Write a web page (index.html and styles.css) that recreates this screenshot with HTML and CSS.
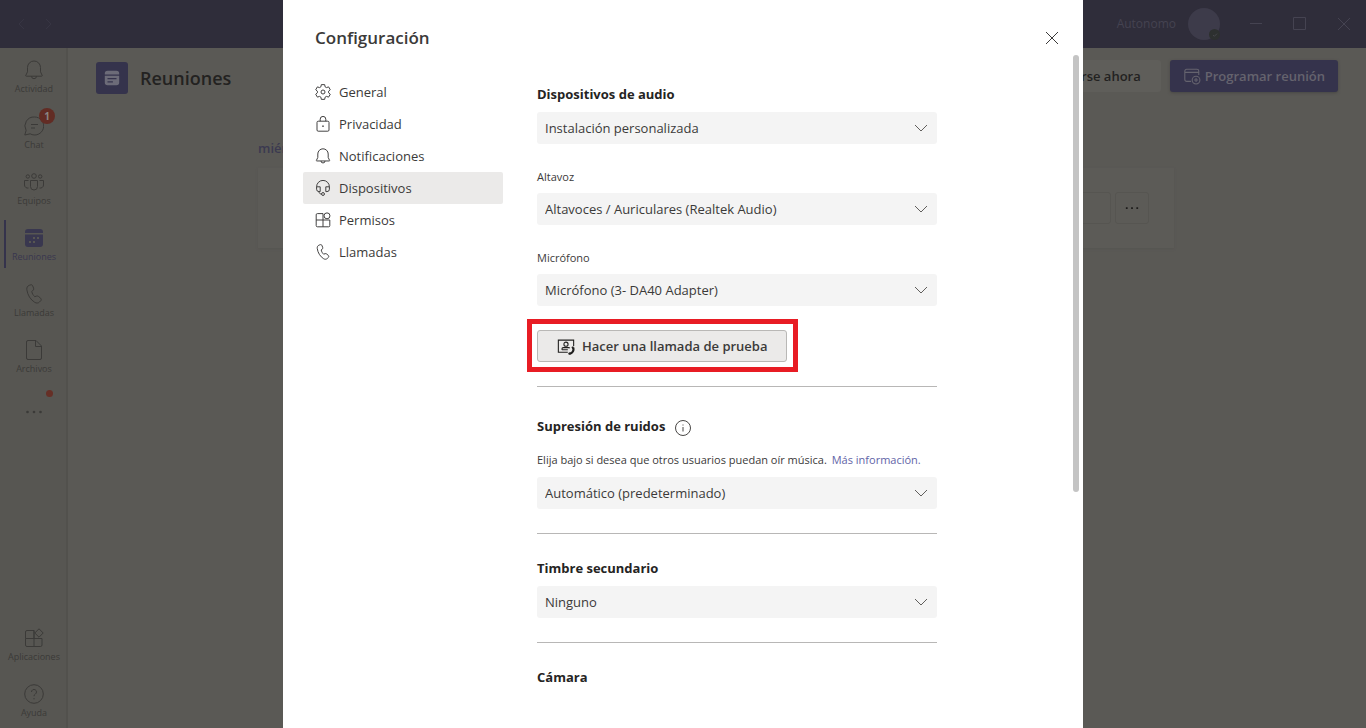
FILE: index.html
```html
<!DOCTYPE html>
<html lang="es">
<head>
<meta charset="utf-8">
<meta name="viewport" content="width=device-width, initial-scale=1">
<title>Configuración</title>
<link rel="stylesheet" href="styles.css">
</head>
<body>
<svg class="defs" aria-hidden="true">
  <symbol id="bell" viewBox="0 0 20 20"><path d="M10 1a6.500 6.500 0 0 0-6.500 6.500v4.300L1.800 15.400a.5.5 0 0 0 .5.8h15.400a.5.5 0 0 0 .5-.8L16.500 11.800V7.500A6.500 6.500 0 0 0 10 1zM7.500 16.200a2.500 2.500 0 0 0 5 0"/></symbol>
  <symbol id="phone" viewBox="0 0 20 20"><path d="M6.800.8 5.300 1.300C3.500 1.900 2.600 3.500 2.800 5.500c.7 5.500 3.700 10.200 8 12.900 1.600 1 3.500.8 4.700-.4l1.200-1.200c.7-.7.700-1.800 0-2.500l-2.100-1.800c-.6-.5-1.300-.6-2-.4l-1.800.6c-1.700-1.400-2.600-3.100-3-5.200l1.400-1.400c.5-.5.7-1.200.4-1.900L8.700 1.900C8.400 1 7.600.5 6.800.8z"/></symbol>
  <symbol id="apps" viewBox="0 0 20 20"><path d="M1.500 10.500V4A1.500 1.500 0 0 1 3 2.500h7v16H3A1.500 1.500 0 0 1 1.500 17v-6.500h16.500V17a1.500 1.500 0 0 1-1.500 1.500H10M10 10.500v-8M15 .8 19.200 5 15 9.200 10.800 5z"/></symbol>
  <symbol id="widgets" viewBox="0 0 20 20"><path d="M10 10V2H3a1.500 1.500 0 0 0-1.500 1.500V17A1.500 1.500 0 0 0 3 18.500h14a1.500 1.500 0 0 0 1.500-1.500v-7h-17M10 10v8.500"/><circle cx="15" cy="4.800" r="3.700"/></symbol>
  <symbol id="chevron" viewBox="0 0 16 16"><path d="m2 5 6 6 6-6"/></symbol>
  <symbol id="cross" viewBox="0 0 16 16"><path d="m2 2 12 12M14 2 2 14"/></symbol>
</svg>

<div class="app">
  <header class="topbar">
    <div class="history">
      <button class="plain" aria-label="Atrás"><svg class="icon small" viewBox="0 0 16 16"><path d="m10 3-5 5 5 5"/></svg></button>
      <button class="plain" aria-label="Adelante"><svg class="icon small" viewBox="0 0 16 16"><path d="m6 3 5 5-5 5"/></svg></button>
    </div>
    <div class="account">
      <span>Autonomo</span>
      <span class="avatar"><i class="presence"><svg class="icon" viewBox="0 0 12 12"><path d="m3 6 2 2 4-4"/></svg></i></span>
    </div>
    <div class="window-buttons">
      <button class="plain" aria-label="Minimizar"><svg class="icon small" viewBox="0 0 16 16"><path d="M2 7.500h12"/></svg></button>
      <button class="plain" aria-label="Maximizar"><svg class="icon small" viewBox="0 0 16 16"><path d="M1.500 1.500h12v12h-12z"/></svg></button>
      <button class="plain" aria-label="Cerrar ventana"><svg class="icon small"><use href="#cross"/></svg></button>
    </div>
  </header>

  <div class="workspace">
    <nav class="rail" aria-label="Aplicaciones">
      <a class="rail-item" href="#"><svg class="icon large"><use href="#bell"/></svg>Actividad</a>
      <a class="rail-item" href="#"><svg class="icon large" viewBox="0 0 20 20"><path d="M10.500 1a9 9 0 1 1-4.300 16.800L.8 19l1.300-4.600A9 9 0 0 1 10.500 1zM7 8.500h7M7 12h4"/></svg>Chat<b class="badge">1</b></a>
      <a class="rail-item" href="#"><svg class="icon large" viewBox="0 0 20 20"><circle cx="10" cy="4" r="2.300"/><circle cx="3.800" cy="4.500" r="1.700"/><circle cx="16.200" cy="4.500" r="1.700"/><path d="M6.500 8.500h7v6a3.500 3.500 0 0 1-7 0zM4.500 8.500h-4v4.500a3.200 3.200 0 0 0 4 3M15.500 8.500h4v4.500a3.200 3.200 0 0 1-4 3"/></svg>Equipos</a>
      <a class="rail-item active" href="#"><svg class="large" viewBox="0 0 20 20"><path fill="currentColor" fill-rule="evenodd" d="M4 1h12a3 3 0 0 1 3 3v1H1V4a3 3 0 0 1 3-3zM1 6.500h18V16a3 3 0 0 1-3 3H4a3 3 0 0 1-3-3zM9 9v2h2V9zm4 0v2h2V9zm-8 4v2h2v-2zm4 0v2h2v-2z"/></svg>Reuniones</a>
      <a class="rail-item" href="#"><svg class="icon large"><use href="#phone"/></svg>Llamadas</a>
      <a class="rail-item" href="#"><svg class="icon large" viewBox="0 0 20 20"><path d="M4 .5h8L17.500 6v12a1.500 1.500 0 0 1-1.500 1.500H4A1.500 1.500 0 0 1 2.500 18V2A1.500 1.500 0 0 1 4 .5zM11.500.5V6.500h6"/></svg>Archivos</a>
      <button class="rail-item more" aria-label="Más aplicaciones"><svg class="large" viewBox="0 0 20 20"><g fill="currentColor"><circle cx="3.500" cy="10" r="1.300"/><circle cx="10" cy="10" r="1.300"/><circle cx="16.500" cy="10" r="1.300"/></g></svg><i class="alert"></i></button>
      <a class="rail-item push" href="#"><svg class="icon large"><use href="#apps"/></svg>Aplicaciones</a>
      <a class="rail-item" href="#"><svg class="icon large" viewBox="0 0 20 20"><circle cx="10" cy="10" r="9.300"/><path d="M7.500 8a2.500 2.500 0 1 1 3.800 2.100c-.9.600-1.300 1-1.300 2.100M10 14v1.300"/></svg>Ayuda</a>
    </nav>

    <main class="main">
      <div class="page-head">
        <span class="page-icon"><svg viewBox="0 0 20 20"><path fill="currentColor" fill-rule="evenodd" d="M5 2h10a3 3 0 0 1 3 3v1H2V5a3 3 0 0 1 3-3zM2 7.500h16V15a3 3 0 0 1-3 3H5a3 3 0 0 1-3-3zM5 10v1.500h10V10zm0 3.500V15h6v-1.500z"/></svg></span>
        <h1 class="page-title">Reuniones</h1>
        <button class="button light">Reunirse ahora</button>
        <button class="button accent"><svg class="icon" viewBox="0 0 20 20"><path d="M9 16H4a2 2 0 0 1-2-2V4.500a2 2 0 0 1 2-2h11.500a2 2 0 0 1 2 2V9M2 6h15.500"/><circle cx="14.500" cy="14.500" r="4.300"/><path d="M14.500 12.300v4.400M12.300 14.500h4.400"/></svg>Programar reunión</button>
      </div>
      <section class="agenda">
        <h2 class="day">miércoles</h2>
        <div class="meeting">
          <button class="button chat" aria-label="Chatear"></button>
          <button class="button dots" aria-label="Más opciones"><svg viewBox="0 0 16 16"><path fill="currentColor" d="M1 7h2v2H1zM7 7h2v2H7zM13 7h2v2h-2z"/></svg></button>
        </div>
      </section>
    </main>
  </div>
</div>

<div class="backdrop">
  <section class="dialog" role="dialog" aria-modal="true" aria-labelledby="dialog-title">
    <header class="dialog-head">
      <h2 class="dialog-title" id="dialog-title">Configuración</h2>
      <button class="plain" aria-label="Cerrar"><svg class="icon small"><use href="#cross"/></svg></button>
    </header>
    <div class="dialog-body">
      <nav class="menu" aria-label="Configuración">
        <a class="menu-item" href="#"><svg class="icon" viewBox="0 0 20 20"><path d="M7.900.8h4.200l.5 2.700 1.700 1 2.700-.9 2.100 3.600-2.100 1.800v2l2.100 1.800-2.100 3.600-2.700-.9-1.700 1-.5 2.700H7.900l-.5-2.700-1.700-1-2.700.9-2.100-3.600L3 11V9L.9 7.200 3 3.600l2.700.9 1.700-1z"/><circle cx="10" cy="10" r="2.500"/></svg>General</a>
        <a class="menu-item" href="#"><svg class="icon" viewBox="0 0 20 20"><path d="M4 6.500h12A1.500 1.500 0 0 1 17.500 8v9.500A1.500 1.500 0 0 1 16 19H4a1.500 1.500 0 0 1-1.500-1.500V8A1.500 1.500 0 0 1 4 6.500zM6.500 6.500V4a3.500 3.500 0 0 1 7 0v2.500"/><circle cx="10" cy="12.700" r=".6"/></svg>Privacidad</a>
        <a class="menu-item" href="#"><svg class="icon"><use href="#bell"/></svg>Notificaciones</a>
        <a class="menu-item current" href="#" aria-current="page"><svg class="icon" viewBox="0 0 20 20"><path d="M2 8.500a8 8 0 0 1 16 0v3a3 3 0 0 1-3 3h-1.500V8.500H18M2 8.500h4.500v6H5a3 3 0 0 1-3-3v-3M5 14.500c0 2 1.200 3 3.200 3"/><circle cx="10" cy="17.500" r="1.800"/></svg>Dispositivos</a>
        <a class="menu-item" href="#"><svg class="icon"><use href="#widgets"/></svg>Permisos</a>
        <a class="menu-item" href="#"><svg class="icon"><use href="#phone"/></svg>Llamadas</a>
      </nav>

      <div class="settings">
        <section class="group">
          <h3 class="heading"><label for="audio">Dispositivos de audio</label></h3>
          <div class="picker"><select id="audio"><option>Instalación personalizada</option></select><svg class="icon small"><use href="#chevron"/></svg></div>
          <label class="label" for="speaker">Altavoz</label>
          <div class="picker"><select id="speaker"><option>Altavoces / Auriculares (Realtek Audio)</option></select><svg class="icon small"><use href="#chevron"/></svg></div>
          <label class="label" for="mic">Micrófono</label>
          <div class="picker"><select id="mic"><option>Micrófono (3- DA40 Adapter)</option></select><svg class="icon small"><use href="#chevron"/></svg></div>
          <div class="highlight">
            <button class="test-call"><svg class="icon" viewBox="0 0 20 20"><path d="M12 17H1.500V3.500h17V10"/><circle cx="10" cy="8" r="2.300"/><path d="M5.500 14.200v-.9A1.500 1.500 0 0 1 7 11.800h6a1.500 1.500 0 0 1 1.200.6M5.500 14.200H12"/><path stroke-width="2.400" d="M18 11.800c1 3-.6 6-4 7M16.500 12.300l2-.8M13.500 17.300l.7 2"/></svg>Hacer una llamada de prueba</button>
          </div>
        </section>
        <section class="group noise">
          <h3 class="heading"><label for="noise">Supresión de ruidos</label><svg class="icon" viewBox="0 0 16 16"><circle cx="8" cy="8" r="7.500"/><path d="M8 7v4.500M8 4.500v1"/></svg></h3>
          <p class="hint">Elija bajo si desea que otros usuarios puedan oír música. <a href="#">Más información.</a></p>
          <div class="picker"><select id="noise"><option>Automático (predeterminado)</option></select><svg class="icon small"><use href="#chevron"/></svg></div>
        </section>
        <section class="group">
          <h3 class="heading"><label for="ringer">Timbre secundario</label></h3>
          <div class="picker"><select id="ringer"><option>Ninguno</option></select><svg class="icon small"><use href="#chevron"/></svg></div>
        </section>
        <section class="group">
          <h3 class="heading">Cámara</h3>
        </section>
      </div>
    </div>
    <div class="scroll-thumb"></div>
  </section>
</div>
</body>
</html>
```

FILE: styles.css
```css
* { box-sizing: border-box; }

body {
  margin: 0;
  height: 100vh;
  overflow: hidden;
  font-family: "Open Sans", "Noto Sans", sans-serif;
  font-size: 13px;
  line-height: 20px;
  color: #3b3a39;
}

h1, h2, h3, p { margin: 0; }
a { color: inherit; text-decoration: none; }
button, select { font: inherit; color: inherit; }

.defs { position: absolute; width: 0; height: 0; }

.icon { fill: none; stroke: currentColor; width: 16px; height: 16px; stroke-width: 1.2; flex: none; }
.small { width: 16px; height: 16px; stroke-width: 1; }
.large { width: 20px; height: 20px; stroke-width: 1; flex: none; }

.plain { display: grid; place-items: center; padding: 0; border: 0; background: none; }

/* Application behind the dialog */
.app { display: flex; flex-direction: column; height: 100%; background: #5a5955; color: #353432; }

.topbar {
  display: flex;
  align-items: center;
  gap: 28px;
  height: 48px;
  padding: 0 14px;
  background: #2f2d3a;
  color: #454351;
  font-size: 12px;
}
.history { display: flex; gap: 10px; color: #373543; }
.account { display: flex; align-items: center; gap: 12px; margin-left: auto; }
.avatar { position: relative; width: 32px; height: 32px; border-radius: 50%; background: #3d3b4a; }
.presence { position: absolute; right: 0; bottom: 0; width: 11px; height: 11px; border-radius: 50%; background: #2d302f; display: grid; place-items: center; color: #4a4a50; }
.presence .icon { width: 8px; height: 8px; }
.window-buttons { display: flex; gap: 28px; }

.workspace { display: flex; flex: 1; min-height: 0; }

.rail { display: flex; flex-direction: column; width: 68px; background: #575652; border-right: 2px solid #52514d; }
.rail-item {
  position: relative;
  display: flex;
  flex-direction: column;
  align-items: center;
  gap: 2px;
  height: 56px;
  padding: 12px 0 0 2px;
  border: 0;
  background: none;
  font-size: 9px;
  line-height: 14px;
  color: #3b3a38;
}
.rail-item.active { color: #39374f; }
.rail-item.active::before { content: ""; position: absolute; left: 4px; top: 4px; bottom: 4px; width: 2px; background: #35334c; }
.push { margin-top: auto; }
.badge { position: absolute; left: 39px; top: 4px; width: 16px; height: 16px; border-radius: 50%; background: #622c24; color: #8a8583; font-size: 10px; line-height: 16px; text-align: center; }
.rail-item.more { padding-top: 18px; }
.alert { position: absolute; left: 46px; top: 6px; width: 7px; height: 7px; border-radius: 50%; background: #662f26; }

.main { flex: 1; min-width: 0; }
.page-head { display: flex; align-items: center; gap: 9px; height: 60px; padding: 0 28px; }
.page-icon { display: grid; place-items: center; width: 32px; height: 32px; border-radius: 3px; background: #35334c; color: #6c6b78; }
.page-icon svg { width: 18px; height: 18px; }
.page-title { margin-right: auto; padding-left: 3px; font-size: 18px; font-weight: 600; line-height: 24px; color: #232221; }

.button { display: flex; align-items: center; gap: 4px; height: 32px; padding: 0 20px; border: 0; border-radius: 3px; font-weight: 600; }
.page-head .button { margin-bottom: 4px; }
.light { background: #5f5e5a; color: #232221; }
.accent { padding: 0 13px; background: #35334c; color: #65636e; box-shadow: 0 1px 3px #484744; }
.accent .icon { width: 18px; height: 18px; }

.agenda { padding: 30px 192px 0 190px; }
.day { font-size: 13px; font-weight: 600; line-height: 20px; color: #3b3950; }
.meeting { display: flex; justify-content: flex-end; align-items: center; gap: 4px; height: 80px; margin-top: 10px; padding-right: 25px; background: #5c5b57; box-shadow: 0 1px 2px #565551; }
.meeting .button { border: 1px solid #565551; background: none; }
.meeting .chat { width: 88px; }
.meeting .dots { width: 34px; padding: 0 9px; color: #1c1b1a; }
.dots svg { width: 14px; height: 14px; }

/* Settings dialog */
.backdrop { position: fixed; inset: 0; display: flex; justify-content: center; }
.dialog { position: relative; width: 800px; max-width: 100%; background: #fff; overflow: hidden; }
.dialog-head { display: flex; justify-content: space-between; align-items: center; padding: 26px 23px 26px 32px; }
.dialog-title { font-size: 17px; font-weight: 600; line-height: 24px; color: #3b3a39; }
.dialog-body { display: flex; gap: 34px; padding-left: 20px; }

.menu { width: 200px; flex: none; }
.menu-item { display: flex; align-items: center; gap: 8px; height: 32px; padding-left: 12px; border-radius: 2px; }
.current { background: #ebeae9; }

.settings { flex: 0 1 400px; min-width: 0; padding-top: 8px; }
.group { display: flex; flex-direction: column; }
.group + .group { margin-top: 24px; padding-top: 24px; border-top: 1px solid #b8b7b6; }
.heading { display: flex; align-items: center; gap: 10px; margin-bottom: 8px; font-size: 13px; font-weight: 700; line-height: 20px; color: #252423; }
.heading .icon { stroke-width: 1; margin-top: 3px; color: #484644; }
.label { margin: 25px 0 8px; font-size: 11px; line-height: 16px; }
.hint { margin: 8px 0 9px; font-size: 11px; line-height: 16px; white-space: nowrap; }
.hint a { margin-left: 2px; color: #6264a7; }

.picker { display: grid; grid-template-columns: 1fr 32px; align-items: center; height: 32px; border-radius: 3px; background: #f4f4f4; }
.picker select { grid-area: 1 / 1 / 2 / 3; width: 100%; height: 32px; padding: 0 8px; border: 0; background: none; appearance: none; }
.picker .icon { grid-area: 1 / 2; justify-self: center; pointer-events: none; color: #605e5c; }

.highlight { align-self: flex-start; margin: 13px 0 0 -10px; padding: 6px 6px 5px 5px; border: 5px solid #e81c24; }
.group + .group.noise { margin-top: 14px; padding-top: 29px; }

.test-call {
  display: flex;
  align-items: center;
  gap: 7px;
  height: 32px;
  padding: 0 19px;
  border: 1px solid #b9b8b6;
  border-radius: 3px;
  background: #ebeae9;
  font-weight: 600;
}
.test-call .icon { width: 18px; height: 18px; color: #201f1e; }

.scroll-thumb { position: absolute; right: 4px; top: 55px; width: 6px; height: 60%; border-radius: 3px; background: #c4c4c4; }
```
